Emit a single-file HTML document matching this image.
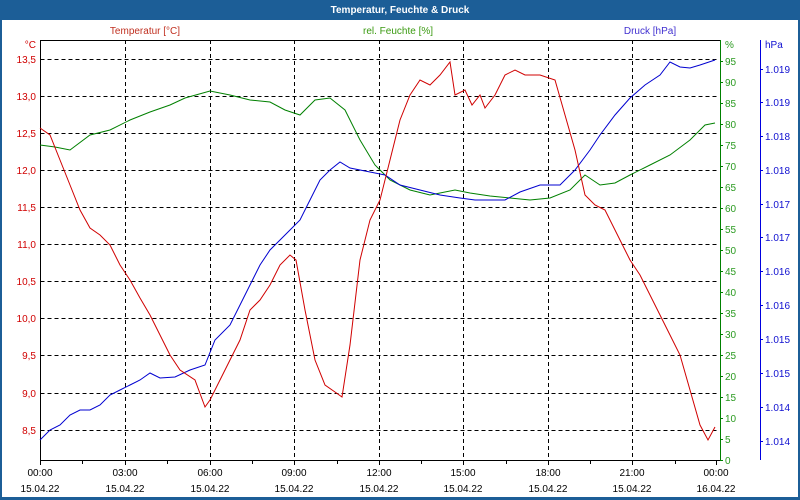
<!DOCTYPE html><html><head><meta charset="utf-8"><style>
body{margin:0;background:#fff}
svg{display:block;font-family:"Liberation Sans",sans-serif;font-size:10px}
</style></head><body>
<svg width="800" height="500" viewBox="0 0 800 500">
<rect x="0" y="0" width="800" height="500" fill="#1c5e97"/>
<rect x="2" y="20" width="796" height="477" fill="#fff"/>
<text x="400" y="13" fill="#fff" font-weight="bold" text-anchor="middle" font-size="10">Temperatur, Feuchte &amp; Druck</text>
<text x="145" y="34" fill="#c03020" text-anchor="middle">Temperatur [°C]</text>
<text x="398" y="34" fill="#3a9a10" text-anchor="middle">rel. Feuchte [%]</text>
<text x="650" y="34" fill="#4030d0" text-anchor="middle">Druck [hPa]</text>
<g stroke="#000" stroke-dasharray="4,3" stroke-width="1">
<path d="M40.5 59.5H718M40.5 96.5H718M40.5 133.5H718M40.5 170.5H718M40.5 207.5H718M40.5 244.5H718M40.5 281.5H718M40.5 318.5H718M40.5 355.5H718M40.5 393.5H718M40.5 430.5H718"/>
<path d="M125.5 40V460M210.5 40V460M294.5 40V460M379.5 40V460M463.5 40V460M548.5 40V460M632.5 40V460"/>
</g>
<path d="M40.5 40V460.5H720M40.5 40.5H720" stroke="#000" fill="none"/>
<path d="M82.5 460v4M125.5 460v5M167.5 460v4M210.5 460v5M252.5 460v4M294.5 460v5M337.5 460v4M379.5 460v5M421.5 460v4M463.5 460v5M506.5 460v4M548.5 460v5M590.5 460v4M632.5 460v5M675.5 460v4M716.5 460v5M40.5 460v5" stroke="#000"/>
<path d="M720.5 40V460" stroke="#008000"/>
<path d="M760.5 40V460" stroke="#0000e0"/>
<g fill="#d00000" text-anchor="end">
<text x="36" y="48">°C</text>
<text x="36" y="63">13,5</text><text x="36" y="100">13,0</text><text x="36" y="137">12,5</text><text x="36" y="174">12,0</text><text x="36" y="211">11,5</text><text x="36" y="248">11,0</text><text x="36" y="285">10,5</text><text x="36" y="322">10,0</text><text x="36" y="359">9,5</text><text x="36" y="397">9,0</text><text x="36" y="434">8,5</text>
</g>
<g fill="#2a9a20">
<text x="725" y="48">%</text>
<text x="725" y="65">95</text><text x="725" y="86">90</text><text x="725" y="107">85</text><text x="725" y="128">80</text><text x="725" y="149">75</text><text x="725" y="170">70</text><text x="725" y="191">65</text><text x="725" y="212">60</text><text x="725" y="233">55</text><text x="725" y="254">50</text><text x="725" y="275">45</text><text x="725" y="296">40</text><text x="725" y="317">35</text><text x="725" y="338">30</text><text x="725" y="359">25</text><text x="725" y="380">20</text><text x="725" y="401">15</text><text x="725" y="422">10</text><text x="725" y="443">5</text><text x="725" y="464">0</text>
</g>
<path d="M720 61.5h3M720 82.5h3M720 103.5h3M720 124.5h3M720 145.5h3M720 166.5h3M720 187.5h3M720 208.5h3M720 229.5h3M720 250.5h3M720 271.5h3M720 292.5h3M720 313.5h3M720 334.5h3M720 355.5h3M720 376.5h3M720 397.5h3M720 418.5h3M720 439.5h3M720 460.5h3" stroke="#008000"/>
<g fill="#1010d0">
<text x="765" y="48">hPa</text>
<text x="765" y="73">1.019</text><text x="765" y="106">1.019</text><text x="765" y="140">1.018</text><text x="765" y="174">1.018</text><text x="765" y="208">1.017</text><text x="765" y="241">1.017</text><text x="765" y="275">1.016</text><text x="765" y="309">1.016</text><text x="765" y="343">1.015</text><text x="765" y="377">1.015</text><text x="765" y="411">1.014</text><text x="765" y="445">1.014</text>
</g>
<path d="M760 69.5h3M760 102.5h3M760 136.5h3M760 170.5h3M760 204.5h3M760 237.5h3M760 271.5h3M760 305.5h3M760 339.5h3M760 373.5h3M760 407.5h3M760 441.5h3" stroke="#0000e0"/>
<g fill="#000" text-anchor="middle">
<text x="40" y="476">00:00</text><text x="125" y="476">03:00</text><text x="210" y="476">06:00</text><text x="294" y="476">09:00</text><text x="379" y="476">12:00</text><text x="463" y="476">15:00</text><text x="548" y="476">18:00</text><text x="632" y="476">21:00</text><text x="716" y="476">00:00</text>
<text x="40" y="492">15.04.22</text><text x="125" y="492">15.04.22</text><text x="210" y="492">15.04.22</text><text x="294" y="492">15.04.22</text><text x="379" y="492">15.04.22</text><text x="463" y="492">15.04.22</text><text x="548" y="492">15.04.22</text><text x="632" y="492">15.04.22</text><text x="716" y="492">16.04.22</text>
</g>
<polyline fill="none" stroke="#008000" points="40,145 55,147 70,150 90,135 110,130 130,120 150,112 170,105 185,98 210,91 230,95 250,100 270,102 285,110 300,115 315,100 330,98 345,110 360,140 375,165 390,180 410,190 430,195 455,190 470,193 490,196 510,198 530,200 550,198 570,190 585,175 600,185 615,183 630,175 650,165 670,155 690,140 705,125 715,123"/>
<polyline fill="none" stroke="#0000d0" points="40,440 50,430 60,425 70,415 80,410 90,410 100,405 110,395 120,390 130,385 140,380 150,373 160,378 175,377 190,370 205,365 215,340 230,325 240,305 250,285 260,265 270,250 280,240 290,230 300,220 310,200 320,180 330,170 340,162 350,168 370,172 385,175 400,185 420,190 440,195 460,198 475,200 490,200 505,200 520,192 540,185 560,185 575,170 590,150 600,135 615,115 630,98 645,85 660,75 670,62 680,67 690,68 700,65 715,60"/>
<polyline fill="none" stroke="#d00000" points="40,128 50,135 60,160 70,185 80,210 90,228 100,235 110,245 120,265 130,280 140,298 150,315 160,335 170,355 180,370 195,380 205,407 210,400 220,380 230,360 240,340 250,310 260,300 270,285 280,265 290,255 296,260 305,310 315,360 325,385 335,392 342,397 350,345 360,260 370,220 380,200 390,160 400,120 410,95 420,80 430,85 440,75 450,62 455,95 465,90 472,105 480,95 485,108 495,95 505,75 515,70 525,75 540,75 555,80 565,115 575,150 585,195 595,205 605,210 620,240 630,260 640,275 650,295 660,315 670,335 680,355 690,390 700,425 708,440 715,427"/>
</svg>
</body></html>
